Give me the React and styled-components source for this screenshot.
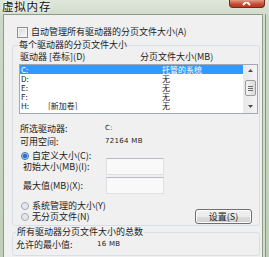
import React from "react";
import styled, { createGlobalStyle } from "styled-components";

const GlobalStyle = createGlobalStyle`
  html, body {
    margin: 0;
    padding: 0;
  }
  body {
    width: 269px;
    height: 257px;
    overflow: hidden;
    background: #c5d4be;
    font-family: "Noto Sans CJK SC", "Noto Sans", sans-serif;
    color: #1c1c1c;
  }
`;

const Frame = styled.div`
  width: 269px;
  height: 257px;
  display: flex;
  flex-direction: column;
  overflow: hidden;
  background: linear-gradient(#dfe6da, #cbd8c5 20px, #bfd0b7);
`;

const TitleBar = styled.div`
  height: 14px;
  flex: none;
  display: flex;
  justify-content: space-between;
  align-items: flex-start;
  padding: 0 4px 0 2px;
`;

const Title = styled.div`
  font-size: 11.5px;
  line-height: 14px;
  margin-top: -1px;
  letter-spacing: 0.8px;
  color: #111;
  text-shadow: 0 0 5px #fff, 0 0 3px #fff;
`;

const CloseButton = styled.div`
  width: 34px;
  height: 7px;
  border: 1px solid #6d2c22;
  border-top: none;
  border-radius: 0 0 4px 4px;
  background: linear-gradient(#e29a86, #c9482f 60%, #b43a24);
  display: flex;
  justify-content: center;
  align-items: flex-end;
  overflow: hidden;
`;

const Client = styled.div`
  flex: 1;
  margin: 0 6px 0 3px;
  background: #f0f0f0;
  border: 1px solid #8d9c8a;
  border-bottom: none;
  box-shadow: 2px 0 0 #d3dfcd, 3px 0 0 #7f9a73;
  padding: 11px 2px 0 8px;
  display: flex;
  flex-direction: column;
  font-size: 9px;
`;

const CheckRow = styled.label`
  display: flex;
  align-items: center;
  gap: 3px;
  height: 12px;
  line-height: 12px;
  margin-left: 5px;
`;

const CheckBox = styled.span`
  width: 9px;
  height: 9px;
  flex: none;
  border: 1px solid #8e8f8f;
  background: linear-gradient(135deg, #d6d6d6, #fbfbfb);
  box-shadow: inset 0 0 0 1px #f4f4f4;
`;

const Group = styled.fieldset`
  margin: ${(p) => p.$top}px 0 0 0;
  padding: ${(p) => p.$padTop}px 0 ${(p) => p.$padBottom}px ${(p) => p.$padLeft}px;
  border: 1px solid #d5dfe5;
  border-radius: 3px;
  min-width: 0;
`;

const Legend = styled.legend`
  padding: 0 1px;
  margin-left: ${(p) => p.$shift}px;
  line-height: 10px;
  font-size: 9px;
`;

const HeaderRow = styled.div`
  display: flex;
  line-height: 10px;
`;

const HeaderCell = styled.div`
  width: ${(p) => p.$w || "auto"};
  flex: none;
`;

const ListBox = styled.div`
  margin: 2px 0 0 -1px;
  width: 239px;
  height: 50px;
  box-sizing: border-box;
  border: 1px solid #a3a9b1;
  background: #fff;
  display: flex;
`;

const Rows = styled.div`
  flex: 1;
  display: flex;
  flex-direction: column;
`;

const Row = styled.div`
  display: flex;
  height: 9px;
  line-height: 9px;
  font-size: 8px;
  padding-left: 1px;
  overflow: hidden;
  background: ${(p) => (p.$selected ? "#3399ff" : "transparent")};
  color: ${(p) => (p.$selected ? "#fff" : "#1c1c1c")};
`;

const DriveCell = styled.span`
  width: 27px;
  flex: none;
`;

const LabelCell = styled.span`
  width: 114px;
  flex: none;
`;

const ScrollBar = styled.div`
  width: 14px;
  flex: none;
  background: linear-gradient(90deg, #e8e8e8, #f5f5f5);
  border-left: 1px solid #ececec;
  display: flex;
  flex-direction: column;
  align-items: center;
  justify-content: space-between;
  padding: 4px 0 5px;
  box-sizing: border-box;
`;

const Thumb = styled.div`
  width: 9px;
  height: 14px;
  border: 1px solid #9b9b9b;
  border-radius: 2px;
  background: linear-gradient(90deg, #f3f3f3, #dcdcdc);
  display: flex;
  flex-direction: column;
  justify-content: center;
  align-items: center;
  gap: 1px;
  margin: 3px 0 4px;
`;

const Grip = styled.span`
  width: 5px;
  height: 1px;
  background: #6f6f6f;
`;

const InfoGrid = styled.div`
  display: grid;
  grid-template-columns: ${(p) => p.$col}px auto;
  grid-auto-rows: 13px;
  align-items: center;
  margin-top: ${(p) => p.$top}px;
  line-height: 13px;
`;

const Value = styled.span`
  font-family: "DejaVu Sans", sans-serif;
  font-size: 7px;
  letter-spacing: 0.3px;
`;

const RadioRow = styled.label`
  display: flex;
  align-items: center;
  gap: 3px;
  height: ${(p) => p.$h}px;
  line-height: ${(p) => p.$h}px;
  padding-left: 1px;
  margin-top: ${(p) => p.$top || 0}px;
`;

const Radio = styled.span`
  width: 8px;
  height: 8px;
  flex: none;
  box-sizing: border-box;
  border-radius: 50%;
  border: 1px solid ${(p) => (p.$checked ? "#3c6fa8" : "#9aa3ad")};
  background: ${(p) =>
    p.$checked
      ? "radial-gradient(circle, #2a6fd0 0 1.8px, #7fb3ee 2.4px, #e9eef3 3px)"
      : "radial-gradient(circle, #e2e6ea 0 2px, #f7f7f7 3px)"};
`;

const SizeRow = styled.div`
  display: flex;
  align-items: center;
  margin-top: ${(p) => p.$top}px;
  padding-left: 3px;
`;

const SizeLabel = styled.span`
  width: 83px;
  flex: none;
`;

const TextBox = styled.div`
  width: 58px;
  height: 17px;
  box-sizing: border-box;
  border: 1px solid #dde1e6;
  border-top-color: #b9bdc3;
  background: #f9f9f9;
`;

const BottomRow = styled.div`
  display: flex;
  justify-content: space-between;
  align-items: flex-end;
  margin-top: 6px;
`;

const RadioColumn = styled.div`
  display: flex;
  flex-direction: column;
`;

const Button = styled.button`
  width: 57px;
  height: 15px;
  margin: 0 7px -2px 0;
  padding: 0;
  border: 1px solid #707070;
  border-radius: 3px;
  background: linear-gradient(#f2f2f2, #ebebeb 50%, #dddddd 51%, #cfcfcf);
  box-shadow: inset 0 0 0 1px #fbfbfb;
  font-family: "Noto Sans CJK SC", "Noto Sans", sans-serif;
  font-size: 9px;
  line-height: 13px;
  color: #1c1c1c;
`;

const drives = [
  { d: "C:", label: "", size: "托管的系统", selected: true },
  { d: "D:", label: "", size: "无" },
  { d: "E:", label: "", size: "无" },
  { d: "F:", label: "", size: "无" },
  { d: "H:", label: "[新加卷]", size: "无" },
];

const ArrowUp = () => (
  <svg width="5" height="3" viewBox="0 0 5 3">
    <path d="M0 3 L2.5 0 L5 3 Z" fill="#4d4d4d" />
  </svg>
);

const ArrowDown = () => (
  <svg width="5" height="3" viewBox="0 0 5 3">
    <path d="M0 0 L2.5 3 L5 0 Z" fill="#4d4d4d" />
  </svg>
);

export default function App() {
  return (
    <>
      <GlobalStyle />
      <Frame>
        <TitleBar>
          <Title>虚拟内存</Title>
          <CloseButton>
            <svg width="10" height="5" viewBox="0 0 10 5">
              <path d="M1 -4 L8 3 M8 -4 L1 3" stroke="#fff" strokeWidth="2" />
            </svg>
          </CloseButton>
        </TitleBar>
        <Client>
          <CheckRow>
            <CheckBox />
            自动管理所有驱动器的分页文件大小(A)
          </CheckRow>

          <Group $top={2} $padTop={2} $padBottom={3} $padLeft={7}>
            <Legend $shift={-2}>每个驱动器的分页文件大小</Legend>
            <HeaderRow>
              <HeaderCell $w="120px">驱动器 [卷标](D)</HeaderCell>
              <HeaderCell>分页文件大小(MB)</HeaderCell>
            </HeaderRow>
            <ListBox>
              <Rows>
                {drives.map((r) => (
                  <Row key={r.d} $selected={r.selected}>
                    <DriveCell>{r.d}</DriveCell>
                    <LabelCell>{r.label}</LabelCell>
                    <span>{r.size}</span>
                  </Row>
                ))}
              </Rows>
              <ScrollBar>
                <ArrowUp />
                <Thumb>
                  <Grip />
                  <Grip />
                  <Grip />
                </Thumb>
                <ArrowDown />
              </ScrollBar>
            </ListBox>

            <InfoGrid $col={85} $top={8}>
              <span>所选驱动器:</span>
              <Value>C:</Value>
              <span>可用空间:</span>
              <Value>72164 MB</Value>
            </InfoGrid>

            <RadioRow $h={10} $top={3}>
              <Radio $checked />
              自定义大小(C):
            </RadioRow>
            <SizeRow $top={-3}>
              <SizeLabel>初始大小(MB)(I):</SizeLabel>
              <TextBox />
            </SizeRow>
            <SizeRow $top={2}>
              <SizeLabel>最大值(MB)(X):</SizeLabel>
              <TextBox />
            </SizeRow>

            <BottomRow>
              <RadioColumn>
                <RadioRow $h={11}>
                  <Radio />
                  系统管理的大小(Y)
                </RadioRow>
                <RadioRow $h={11}>
                  <Radio />
                  无分页文件(N)
                </RadioRow>
              </RadioColumn>
              <Button>设置(S)</Button>
            </BottomRow>
          </Group>

          <Group $top={1} $padTop={1} $padBottom={4} $padLeft={3}>
            <Legend $shift={0}>所有驱动器分页文件大小的总数</Legend>
            <InfoGrid $col={81} $top={0}>
              <span>允许的最小值:</span>
              <Value>16 MB</Value>
            </InfoGrid>
          </Group>
        </Client>
      </Frame>
    </>
  );
}
